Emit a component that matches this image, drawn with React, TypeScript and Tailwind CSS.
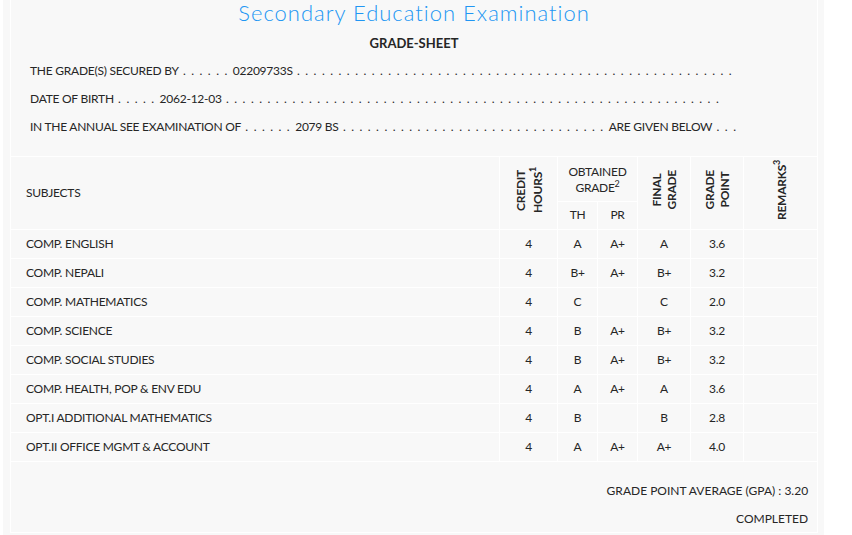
const rows = [
  ['COMP. ENGLISH', '4', 'A', 'A+', 'A', '3.6'],
  ['COMP. NEPALI', '4', 'B+', 'A+', 'B+', '3.2'],
  ['COMP. MATHEMATICS', '4', 'C', '', 'C', '2.0'],
  ['COMP. SCIENCE', '4', 'B', 'A+', 'B+', '3.2'],
  ['COMP. SOCIAL STUDIES', '4', 'B', 'A+', 'B+', '3.2'],
  ['COMP. HEALTH, POP & ENV EDU', '4', 'A', 'A+', 'A', '3.6'],
  ['OPT.I ADDITIONAL MATHEMATICS', '4', 'B', '', 'B', '2.8'],
  ['OPT.II OFFICE MGMT & ACCOUNT', '4', 'A', 'A+', 'A+', '4.0'],
];

function Dots({ n }: { n: number }) {
  return <span className="tracking-[1.2px] whitespace-pre">{' .'.repeat(n) + ' '}</span>;
}

function Vertical({ children }: { children: React.ReactNode }) {
  return (
    <div className="mx-auto inline-block rotate-180 text-center font-bold leading-[15px] [writing-mode:vertical-rl]">
      {children}
    </div>
  );
}

function Sup({ children }: { children: React.ReactNode }) {
  return <sup className="static align-super text-[9px] leading-none">{children}</sup>;
}

export default function App() {
  return (
    <div className="min-h-[535px] bg-white font-['Lato','Liberation_Sans',sans-serif] text-[12px] tracking-[-0.25px] text-[#262626]">
      <div className="ml-[3px] w-[821px] bg-[#f8f8f8] pb-[3px] pl-[7px]">
        <table className="w-[807px] table-fixed border-collapse">
          <colgroup>
            <col className="w-[489px]" />
            <col className="w-[58px]" />
            <col className="w-[40px]" />
            <col className="w-[40px]" />
            <col className="w-[53px]" />
            <col className="w-[53px]" />
            <col className="w-[74px]" />
          </colgroup>
          <tbody>
            <tr>
              <td colSpan={7} className="h-[156px] border-x border-b border-white p-0 align-top">
                <div className="h-[26px] text-center font-['Lato',sans-serif] text-[22px] font-light leading-[26px] tracking-[1px] text-[#2196f3]">
                  Secondary Education Examination
                </div>
                <div className="mt-[7px] h-[20px] text-center text-[13px] font-bold leading-[20px] tracking-normal">
                  GRADE-SHEET
                </div>
                <div className="mt-[4px] pl-[19px] whitespace-nowrap">
                  <div className="h-[28px] leading-[28px]">
                    THE GRADE(S) SECURED BY<Dots n={6} />02209733S<Dots n={53} />
                  </div>
                  <div className="h-[28px] leading-[28px]">
                    DATE OF BIRTH<Dots n={5} />2062-12-03<Dots n={60} />
                  </div>
                  <div className="h-[28px] leading-[28px]">
                    IN THE ANNUAL SEE EXAMINATION OF<Dots n={6} />2079 BS<Dots n={32} />ARE GIVEN BELOW<Dots n={3} />
                  </div>
                </div>
              </td>
            </tr>
            <tr className="h-[45px]">
              <td rowSpan={2} className="border border-white pl-[15px] align-middle">SUBJECTS</td>
              <td rowSpan={2} className="border border-white p-0 text-center align-middle">
                <Vertical>
                  CREDIT
                  <br />
                  HOURS<Sup>1</Sup>
                </Vertical>
              </td>
              <td colSpan={2} className="border border-white p-0 pt-[2px] text-center align-middle leading-[15px]">
                OBTAINED
                <br />
                GRADE<Sup>2</Sup>
              </td>
              <td rowSpan={2} className="border border-white p-0 text-center align-middle">
                <Vertical>
                  FINAL
                  <br />
                  GRADE
                </Vertical>
              </td>
              <td rowSpan={2} className="border border-white p-0 text-center align-middle">
                <Vertical>
                  GRADE
                  <br />
                  POINT
                </Vertical>
              </td>
              <td rowSpan={2} className="border border-white p-0 text-center align-middle">
                <Vertical>
                  REMARKS<Sup>3</Sup>
                </Vertical>
              </td>
            </tr>
            <tr className="h-[28px]">
              <td className="border border-white p-0 text-center">TH</td>
              <td className="border border-white p-0 text-center">PR</td>
            </tr>
            {rows.map((r) => (
              <tr key={r[0]} className="h-[29px]">
                <td className="border border-white pl-[15px]">{r[0]}</td>
                {r.slice(1).map((v, i) => (
                  <td key={i} className="border border-white p-0 text-center">
                    {v}
                  </td>
                ))}
                <td className="border border-white" />
              </tr>
            ))}
            <tr className="h-[71px]">
              <td colSpan={7} className="border border-white pr-[9px] text-right align-top tracking-normal">
                <div className="mt-[19px] leading-[20px]">GRADE POINT AVERAGE (GPA) : 3.20</div>
                <div className="mt-[8px] leading-[20px]">COMPLETED</div>
              </td>
            </tr>
          </tbody>
        </table>
      </div>
    </div>
  );
}
